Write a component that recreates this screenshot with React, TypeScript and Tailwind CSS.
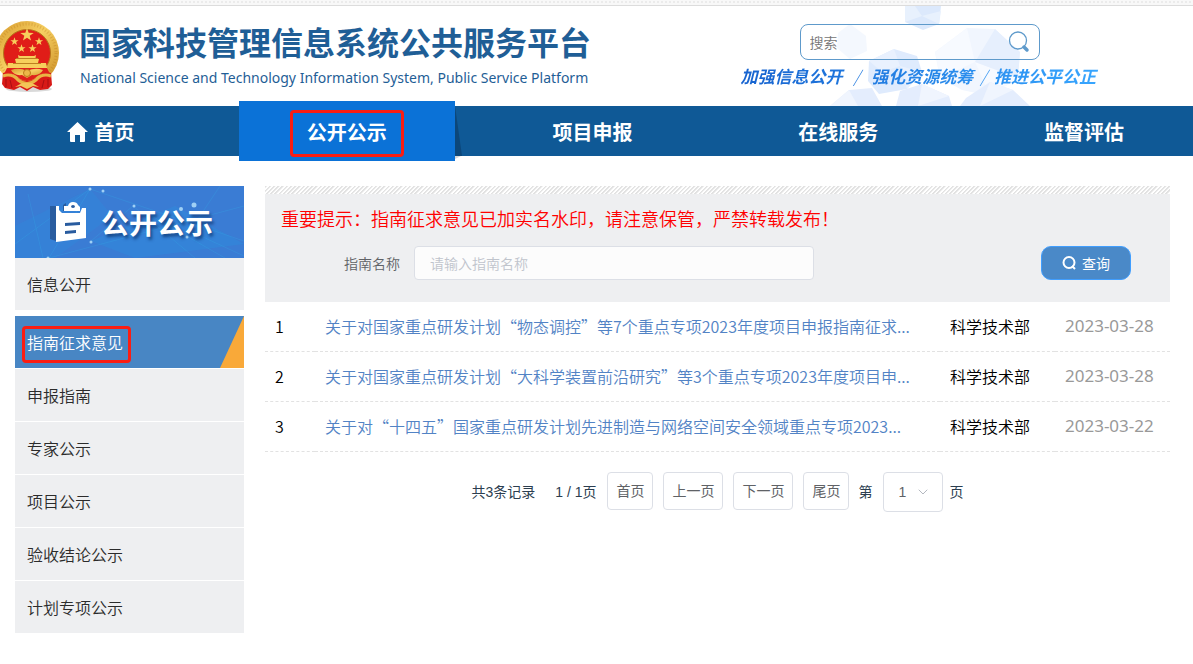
import React, { useState } from 'react';
import { ChevronDown } from 'lucide-react';

const navItems = ['首页', '公开公示', '项目申报', '在线服务', '监督评估'];

const sideItems = ['申报指南', '专家公示', '项目公示', '验收结论公示', '计划专项公示'];

const rows = [
  { id: 1, title: '关于对国家重点研发计划“物态调控”等7个重点专项2023年度项目申报指南征求...', dept: '科学技术部', date: '2023-03-28' },
  { id: 2, title: '关于对国家重点研发计划“大科学装置前沿研究”等3个重点专项2023年度项目申...', dept: '科学技术部', date: '2023-03-28' },
  { id: 3, title: '关于对“十四五”国家重点研发计划先进制造与网络空间安全领域重点专项2023...', dept: '科学技术部', date: '2023-03-22' },
];

const STAR = 'M0 -5 L1.2 -1.6 L4.8 -1.5 L1.9 .6 L2.9 4 L0 2 L-2.9 4 L-1.9 .6 L-4.8 -1.5 L-1.2 -1.6Z';

const Emblem: React.FC = () => (
  <svg className="h-[72px] w-[60px] shrink-0" viewBox="0 0 60 72" aria-hidden="true">
    <defs>
      <linearGradient id="gold" x1="0" y1="0" x2="1" y2="1">
        <stop offset="0" stopColor="#d79a2c" />
        <stop offset=".45" stopColor="#f6cf62" />
        <stop offset="1" stopColor="#c98a20" />
      </linearGradient>
    </defs>
    <ellipse cx="29" cy="68" rx="23" ry="3" fill="#000" opacity=".15" />
    <circle cx="27" cy="32" r="32" fill="url(#gold)" />
    <circle cx="27" cy="32" r="29" fill="none" stroke="#b97a1c" strokeWidth="3" strokeDasharray="1 2" opacity=".35" />
    <circle cx="27" cy="32" r="23.500" fill="#e01d18" stroke="#b5761a" strokeWidth="1" />
    <g fill="#f7cf5c">
      <path d={STAR} transform="translate(27 14) scale(1.4)" />
      <path d={STAR} transform="translate(14.500 20.500) scale(.85)" />
      <path d={STAR} transform="translate(39 20.500) scale(.85)" />
      <path d={STAR} transform="translate(21.500 27.500) scale(.85)" />
      <path d={STAR} transform="translate(32.500 27.500) scale(.85)" />
      <path d="M18 34 L20 35 H34 L36 34 L35.500 37 H18.500Z M15 38 H39 L38 42 H16Z M8 42 H46 L47 47 H7Z" />
    </g>
    <path d="M16 37.500 H38 M13 42.500 H41" stroke="#bd8020" strokeWidth="1" />
    <path d="M3 52 Q9 50 14 54 Q20 60 27 60 Q34 60 40 54 Q45 50 51 52 L52 64 L48 68 L40 69 L33 66 L27 70 L20 66 L14 69 L5 67 L2 63Z" fill="#d81a17" />
    <path d="M7 47 H47 L50 53 Q41 51 34 58 Q27 62 20 58 Q13 51 4 53Z" fill="#df211b" />
    <path d="M11 49 Q19 46 27 50 Q35 46 43 49 Q40 55 32 54 L27 57 L22 54 Q14 55 11 49Z" fill="url(#gold)" />
    <circle cx="27" cy="52" r="3.500" fill="#ecb848" stroke="#bd7b1d" />
    <path d="M3 55 Q12 52 18 59 Q27 66 36 59 Q42 52 51 55" fill="none" stroke="#e9b445" strokeWidth="3" />
    <path d="M15 66 L22 62 L32 62 L39 66 L33 65 L27 68 L21 65Z" fill="#f3c558" />
    <path d="M10 59 L12 67 M44 59 L42 67 M6 58 V66 M48 58 V66" stroke="#a70f12" strokeWidth="1" />
  </svg>
);

const HeaderPattern: React.FC = () => (
  <svg className="pointer-events-none absolute right-[143px] bottom-0 h-[100px] w-[220px]" viewBox="0 0 220 100" aria-hidden="true">
    <path d="M75 0 H111 L109 18 L93 24 L75 16Z" fill="#dce9fc" />
    <path d="M75 0 L85 0 L92 10 L75 16Z M92 10 L111 5 L109 18Z" fill="#e8f1fd" />
    <path d="M8 27 L20 18 L36 30 L37 45 L20 53 L7 42Z" fill="#f4f8fe" />
    <path d="M39 55 L64 43 L87 50 L92 66 L77 83 L49 88 L38 75Z" fill="#dfebfd" />
    <path d="M39 55 L64 43 L70 60 L52 66Z M70 60 L92 66 L77 83Z" fill="#e9f1fe" />
    <path d="M105 46 L137 22 L165 23 L190 46 L188 72 L160 90 L132 84 L110 72Z" fill="#f1f6fe" />
    <path d="M105 46 L137 22 L145 56 L110 72Z M145 56 L188 72 L160 90Z" fill="#f7faff" />
    <path d="M165 23 L190 46 L188 72 L145 56Z" fill="#e6effd" />
    <path d="M0 100 L19 84 L42 82 L52 100Z M70 85 L92 78 L119 90 L122 100 H66Z M136 92 L160 76 L183 84 L200 100 H130Z" fill="#e4edfd" />
    <path d="M0 100 L19 84 L28 100Z M92 78 L119 90 L88 100Z M160 76 L183 84 L150 100Z" fill="#f0f5fe" />
  </svg>
);

const SideBanner: React.FC = () => (
  <div className="relative flex h-[72px] items-center gap-[14px] overflow-hidden bg-[#3a7cd4] pl-[35px]">
    <svg className="absolute inset-0 h-full w-full" viewBox="0 0 229 72" preserveAspectRatio="none" aria-hidden="true">
      <path d="M0 40 L75 3 L97 30 L40 72 H0Z" fill="#2f8bdc" opacity=".35" />
      <path d="M76 55 L160 20 L229 58 L120 72Z" fill="#2c93e0" opacity=".35" />
      <path d="M0 58 L75 3 L34 72 M13 8 L28 72 M76 55 L118 20 L180 72 M34 72 L229 20 M128 25 L210 72 M75 3 L229 55 M205 0 L175 45 L229 70" stroke="#35a5e6" strokeWidth="1" fill="none" opacity=".3" />
      <g fill="#9fd0f5">
        <circle cx="75" cy="3" r="1.500" />
        <circle cx="88" cy="5" r="1.500" />
        <circle cx="119" cy="20" r="1.500" />
        <circle cx="166" cy="23" r="2" />
        <circle cx="179" cy="19" r="2.500" />
        <circle cx="76" cy="56" r="1.500" />
        <circle cx="172" cy="51" r="1.500" />
        <circle cx="33" cy="72" r="1.500" />
      </g>
    </svg>
    <svg className="relative h-[40px] w-[37px]" viewBox="0 0 37 40" aria-hidden="true">
      <path d="M0 4 H6 V39 L0 37Z M13 3 L16 1 V9 H13Z" fill="#295c9f" />
      <path d="M6 4 H9 V8 L12 11 H30 L32 6 H36 V36 L6 40Z" fill="#fff" />
      <path d="M14 4 H18 Q19 0 23 0 Q27 0 28 3 L30 5 V9 H14Z" fill="#fff" />
      <path d="M21 5 Q21 3 23 3 Q25 3 25 5 Q23 7 21 5Z" fill="#295c9f" />
      <path d="M15 21 L30 20 V23 L15 24Z M15 29 L26 28 V31 L15 32Z" fill="#295c9f" />
    </svg>
    <h2 className="relative text-[28px] leading-10 font-bold text-white [text-shadow:2px_3px_3px_rgba(0,30,80,0.55)]">公开公示</h2>
  </div>
);

const App: React.FC = () => {
  const [keyword, setKeyword] = useState('');
  const [name, setName] = useState('');

  return (
    <div className="w-full overflow-x-clip bg-white font-['Noto_Sans_CJK_SC','Liberation_Sans',sans-serif] font-[350] text-black">
      <div className="h-[6px] border-b border-[#dcdcdc] bg-[#f8f8f8] bg-[radial-gradient(#ebebeb_1px,transparent_1px)] bg-[size:4px_4px]" />

      {/* Header */}
      <header className="relative flex h-[100px] items-start justify-between">
        <HeaderPattern />
        <div className="flex gap-[19px] pt-[15px]">
          <Emblem />
          <div className="text-[#1f5e96]">
            <h1 className="text-[32px] leading-10 font-bold whitespace-nowrap">国家科技管理信息系统公共服务平台</h1>
            <p className="mt-[7px] pl-px font-['Noto_Sans',sans-serif] text-sm leading-5 font-normal whitespace-nowrap">National Science and Technology Information System, Public Service Platform</p>
          </div>
        </div>
        <div className="relative mr-[91px] pt-[18px]">
          <form className="ml-[59px] flex h-9 w-60 items-center rounded-lg border border-[#5e9acb] pr-2 pl-[9px]" onSubmit={(e) => e.preventDefault()}>
            <input
              type="text"
              aria-label="搜索"
              placeholder="搜索"
              value={keyword}
              onChange={(e) => setKeyword(e.target.value)}
              className="min-w-0 flex-1 bg-transparent text-sm outline-none placeholder:text-[#757575]"
            />
            <button type="submit" aria-label="提交搜索">
              <svg className="h-6 w-6" viewBox="0 0 24 24" fill="none" stroke="#5e9acb" aria-hidden="true">
                <circle cx="11" cy="10.500" r="8.500" strokeWidth="1.300" />
                <path d="M17 17 L20 20" strokeWidth="3.500" strokeLinecap="round" />
              </svg>
            </button>
          </form>
          <p className="flex gap-[7px] bg-linear-to-r from-[#1763cf] to-[#38a6ff] bg-clip-text pr-[6px] text-[17px] leading-8 font-bold whitespace-nowrap text-transparent italic">
            <span>加强信息公开</span>
            <span className="px-1 font-light">/</span>
            <span>强化资源统筹</span>
            <span className="font-light">/</span>
            <span>推进公平公正</span>
          </p>
        </div>
      </header>

      {/* Main nav */}
      <nav className="h-[50px] bg-[#0f5996]">
        <ul className="-mr-[14px] -ml-[22px] grid grid-cols-5">
          {navItems.map((item) => (
            <li key={item} className="h-[50px]">
              {item === '公开公示' ? (
                <a href="#" className="relative mx-[15px] -mt-[5px] flex h-[60px] items-center justify-center bg-[#0b72d7] text-xl font-bold text-white">
                  <span className="mt-1 rounded border-3 border-[#fb1d13] px-[14px] pt-px pb-[5px] leading-[35px]">{item}</span>
                  <svg className="absolute top-[5px] left-full h-[54px] w-[7px]" viewBox="0 0 7 54" aria-hidden="true">
                    <path d="M0 0 L7 50 H0Z" fill="#0c477a" />
                    <path d="M0 50 H6 L0 53Z" fill="#d6d6d6" />
                  </svg>
                </a>
              ) : (
                <a href="#" className="flex h-[52px] items-center justify-center gap-[6px] text-xl font-bold text-white">
                  {item === '首页' && (
                    <svg className="h-5 w-[21px]" viewBox="0 0 21 20" fill="#fff" aria-hidden="true">
                      <path d="M10.500 0 L21 10 H18 V19 Q18 20 17 20 H13 V13 H8 V20 H4 Q3 20 3 19 V10 H0Z" />
                    </svg>
                  )}
                  {item}
                </a>
              )}
            </li>
          ))}
        </ul>
      </nav>

      <main className="flex gap-[21px] pt-[30px] pr-[23px] pb-8 pl-[15px]">
        {/* Side menu */}
        <aside className="w-[229px] shrink-0 leading-[52px] text-[#2b2b2b]">
          <SideBanner />
          <a href="#" className="block bg-[#eeeff1] pl-3">信息公开</a>
          <a href="#" className="relative mt-[6px] flex h-[52px] items-center bg-[#4886c4] pt-1 pl-[7px] leading-[27px] text-white">
            <span className="relative rounded border-3 border-[#fb1d13] pr-[5px] pb-1 pl-[2px]">指南征求意见</span>
            <svg className="absolute top-0 right-0 h-full w-6" viewBox="0 0 24 52" aria-hidden="true">
              <path d="M24 0 V52 H0Z" fill="#f9a939" />
            </svg>
          </a>
          <ul>
            {sideItems.map((item) => (
              <li key={item} className="mt-px">
                <a href="#" className="block bg-[#eeeff1] pl-3">{item}</a>
              </li>
            ))}
          </ul>
        </aside>

        <section className="min-w-0 flex-1">
          {/* Query panel */}
          <div className="h-2 bg-[repeating-linear-gradient(135deg,#e2e2e2_0px,#e2e2e2_1px,#fff_2px,#fff_3px)]" />
          <div className="h-[108px] bg-[#eeeff1]">
            <p className="pt-2 pl-4 text-lg leading-8 text-[#f00]">重要提示：指南征求意见已加实名水印，请注意保管，严禁转载发布！</p>
            <form className="mt-3 flex items-center pr-[39px] pl-[79px]" onSubmit={(e) => e.preventDefault()}>
              <label htmlFor="guide-name" className="mr-[14px] text-sm text-[#606266]">指南名称</label>
              <input
                id="guide-name"
                type="text"
                placeholder="请输入指南名称"
                value={name}
                onChange={(e) => setName(e.target.value)}
                className="h-[34px] w-[400px] rounded border border-[#dcdfe6] bg-[#fcfcfc] px-[15px] text-sm outline-none placeholder:text-[#c0c4cc]"
              />
              <button type="submit" className="ml-auto flex h-[34px] w-[90px] items-center justify-center gap-[6px] rounded-[10px] border border-[#409eff] bg-[#4a89c8] text-sm font-normal text-white">
                <svg className="h-[14px] w-[14px]" viewBox="0 0 14 14" fill="none" stroke="#fff" strokeWidth="2" aria-hidden="true">
                  <circle cx="7" cy="6.500" r="5.500" />
                  <path d="M10 10 L13 13" />
                </svg>
                查询
              </button>
            </form>
          </div>

          {/* Notice list */}
          <table className="w-full table-fixed border-separate border-spacing-0 text-left text-base [&_td]:h-[50px] [&_td]:border-b [&_td]:border-dashed [&_td]:border-[#e2e2e2] [&_td]:pb-[2px]">
            <colgroup>
              <col className="w-[50px]" />
              <col />
              <col className="w-[115px]" />
              <col className="w-[115px]" />
            </colgroup>
            <tbody>
              {rows.map((row) => (
                <tr key={row.id}>
                  <td className="pl-[10px]">{row.id}</td>
                  <td className="truncate px-[10px]">
                    <a href="#" className="text-[#5283c5]">{row.title}</a>
                  </td>
                  <td className="px-[10px]">{row.dept}</td>
                  <td className="pl-[10px] font-['Noto_Sans',sans-serif] text-[17px] font-normal text-[#999]">{row.date}</td>
                </tr>
              ))}
            </tbody>
          </table>

          {/* Pagination */}
          <div className="mt-5 flex h-10 items-center justify-center gap-[10px] font-['Liberation_Sans','Noto_Sans_CJK_SC',sans-serif] text-sm font-normal text-[#2c3e50]">
            <span className="mr-[10px]">共3条记录</span>
            <span>1 / 1页</span>
            {['首页', '上一页', '下一页', '尾页'].map((label) => (
              <button key={label} type="button" className="-mt-[2px] h-[38px] rounded border border-[#dcdfe6] pr-[7px] pl-[9px] text-[#606266]">
                {label}
              </button>
            ))}
            <label htmlFor="page-no">第</label>
            <span className="relative -mr-[3px]">
              <select id="page-no" className="h-10 w-[60px] appearance-none rounded border border-[#dcdfe6] bg-white pl-[15px] text-[#606266] outline-none">
                <option>1</option>
              </select>
              <ChevronDown className="pointer-events-none absolute top-3 right-[12px] h-4 w-4 text-[#b4b8c0]" strokeWidth={1.5} />
            </span>
            <span>页</span>
          </div>
        </section>
      </main>
    </div>
  );
};

export default App;
